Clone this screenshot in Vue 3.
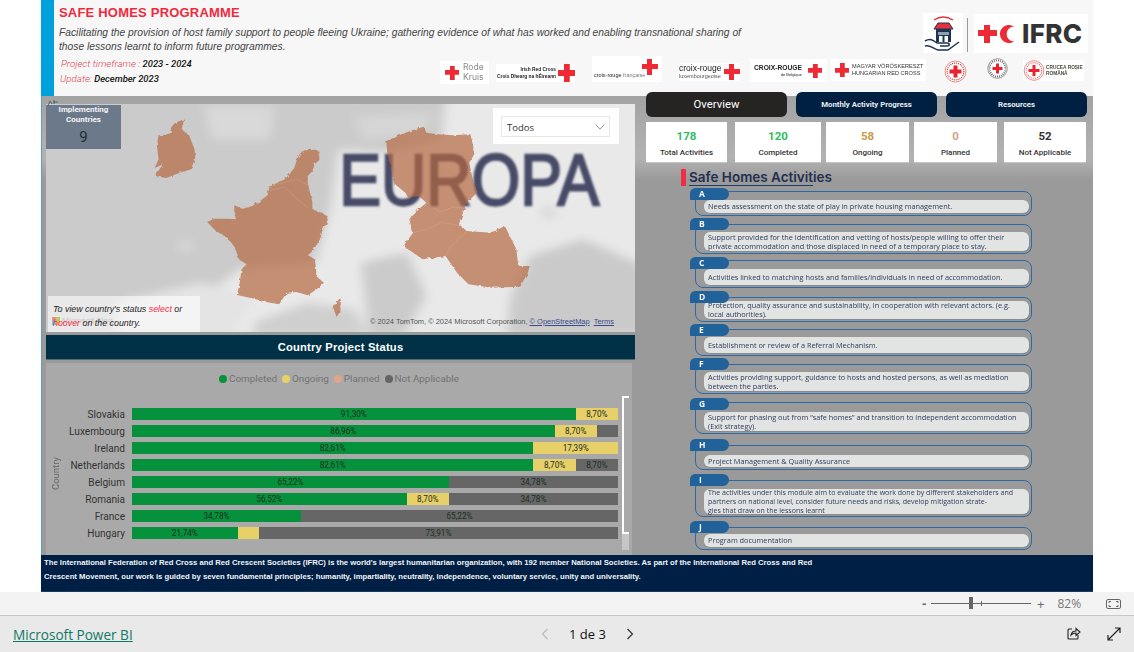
<template>
  <div class="page">
    <div class="report">
      <header class="top">
        <div class="strip"></div>
        <div class="top-body">
          <div class="top-row">
            <div class="intro">
              <h1 class="prog-title">SAFE HOMES PROGRAMME</h1>
              <p class="prog-desc">Facilitating the provision of host family support to people fleeing Ukraine; gathering evidence of what has worked and enabling transnational sharing of those lessons learnt to inform future programmes.</p>
            </div>
            <div class="brand">
              <div class="house-box">
                <svg width="40" height="40" viewBox="0 0 40 40">
                  <path d="M11 7 Q20 1 30 7" fill="none" stroke="#e8303c" stroke-width="1.300" />
                  <path d="M11 16 L15 10 H26 L30 16 Z" fill="#e8303c" stroke="#1c3553" stroke-width="1" />
                  <rect x="13" y="16" width="15" height="13" fill="#1c3553" />
                  <rect x="15" y="19" width="11" height="3" fill="#8fa0b0" />
                  <rect x="16" y="23" width="3.500" height="6" fill="#fff" />
                  <rect x="21.500" y="23" width="3.500" height="6" fill="#fff" />
                  <path d="M2 28 C7 25 10 27 14 30 L24 30 C27 30 27 33 24 33 L17 33 M2 33 C7 31 10 36 15 37 L25 37 L36 29" fill="none" stroke="#1c3553" stroke-width="1.500" />
                </svg>
              </div>
              <div class="brand-rule"></div>
              <div class="ifrc-box">
                <span class="cross cross-lg"></span>
                <svg class="crescent" width="18" height="18" viewBox="0 0 18 18">
                  <path d="M16 1.600 A9 9 0 1 0 16 16.400 A7.200 7.200 0 0 1 16 1.600 Z" fill="#ee2a35" />
                </svg>
                <span class="ifrc-word">IFRC</span>
              </div>
            </div>
          </div>
          <div class="bottom-row">
            <div class="dates">
              <p class="date-line first"><span class="date-key">Project timeframe : </span><span class="date-val">2023 - 2024</span></p>
              <p class="date-line"><span class="date-key">Update: </span><span class="date-val">December 2023</span></p>
            </div>
            <div class="logo logo-rode">
              <span class="cross cross-14"></span>
              <span class="rode-word">Rode<br>Kruis</span>
            </div>
            <div class="logo logo-irish">
              <span class="irish-word"><b>Irish Red Cross</b><b>Crois Dhearg na hÉireann</b></span>
              <span class="cross cross-17"></span>
            </div>
            <div class="logo logo-french">
              <span class="french-word">croix-rouge <i>française</i></span>
              <span class="cross cross-16"></span>
            </div>
            <div class="logo logo-lux">
              <span class="lux-word">croix-rouge<small>luxembourgeoise</small></span>
              <span class="cross cross-16"></span>
            </div>
            <div class="logo logo-belg">
              <span class="belg-word">CROIX-ROUGE<small>de Belgique</small></span>
              <span class="cross cross-14"></span>
            </div>
            <div class="logo logo-hung">
              <span class="cross cross-14"></span>
              <span class="hung-word">MAGYAR VÖRÖSKERESZT<br>HUNGARIAN RED CROSS</span>
            </div>
            <div class="logo logo-round-a">
              <svg width="23" height="23" viewBox="0 0 23 23">
                <circle cx="11.500" cy="11.500" r="10.500" fill="#fff" stroke="#e88" stroke-width="1" />
                <circle cx="11.500" cy="11.500" r="8.400" fill="#fff" stroke="#a33" stroke-width="1.200" stroke-dasharray="1 1" />
                <path d="M9.500 5.500h4v4h4v4h-4v4h-4v-4h-4v-4h4z" fill="#e8232f" />
              </svg>
            </div>
            <div class="logo logo-round-b">
              <svg width="21" height="21" viewBox="0 0 21 21">
                <circle cx="10.500" cy="10.500" r="9.800" fill="#fff" stroke="#999" stroke-width="1" />
                <circle cx="10.500" cy="10.500" r="8" fill="#fff" stroke="#777" stroke-width="2" stroke-dasharray="1 1" />
                <path d="M9 5.500h3v3.500h3.500v3h-3.500v3.500h-3v-3.500h-3.500v-3h3.500z" fill="#e8232f" />
              </svg>
            </div>
            <div class="logo logo-rom">
              <svg width="22" height="21" viewBox="0 0 21 21">
                <circle cx="10.500" cy="10.500" r="9.800" fill="#fff" stroke="#e88" stroke-width="1" />
                <circle cx="10.500" cy="10.500" r="7.800" fill="#fff" stroke="#d66" stroke-width="1.200" stroke-dasharray="1 1" />
                <path d="M9 5h3v4h4v3h-4v4h-3v-4h-4v-3h4z" fill="#e8232f" />
              </svg>
              <span class="rom-word">CRUCEA ROȘIE<br>ROMÂNĂ</span>
            </div>
          </div>
        </div>
      </header>

      <main class="main">
        <section class="left-col">
          <svg class="corner-mark" width="12" height="8" viewBox="0 0 12 8">
            <path d="M1 7 3 2 5 5M6 3h5M7 1v4" fill="none" stroke="#4a5560" stroke-width=".8" />
          </svg>
          <div class="map">
            <svg class="map-art" viewBox="16 24 1539 684" preserveAspectRatio="none">
              <defs>
                <filter id="soft" x="-10%" y="-10%" width="120%" height="120%">
                  <feGaussianBlur stdDeviation="14" />
                </filter>
                <filter id="letters" x="-5%" y="-10%" width="110%" height="120%">
                  <feGaussianBlur stdDeviation="3" />
                </filter>
                <filter id="rough" x="-5%" y="-5%" width="110%" height="110%">
                  <feTurbulence type="fractalNoise" baseFrequency=".09" numOctaves="2" seed="4" />
                  <feDisplacementMap in="SourceGraphic" scale="9" />
                </filter>
              </defs>
              <rect x="16" y="24" width="1539" height="684" fill="#e9e9e9" />
              <g filter="url(#soft)">
                <path d="M-20 0 H1060 L1050 130 L900 170 L780 160 L760 330 L720 500 L520 520 L430 600 L200 720 H-20 Z" fill="#cbcbcb" />
                <path d="M430 30 L610 30 L600 130 L450 130 Z" fill="#d9d9d9" />
                <path d="M820 60 L1030 50 L1000 120 L840 130 Z" fill="#d5d5d5" />
                <path d="M200 620 L420 560 L560 600 L500 720 L200 720 Z" fill="#e4e4e4" />
                <path d="M840 500 L960 470 L1010 600 L950 720 L860 720 Z" fill="#cbcbcb" />
                <path d="M560 680 L700 620 L820 640 L860 720 L560 720 Z" fill="#cfcfcf" />
                <path d="M1280 480 L1420 430 L1600 520 L1600 720 L1220 720 L1230 600 Z" fill="#cacaca" />
                <circle cx="1330" cy="350" r="20" fill="#d8d8d8" />
                <circle cx="380" cy="450" r="18" fill="#d9d9d9" />
              </g>
              <text x="782" y="326" class="europa" textLength="680" lengthAdjust="spacingAndGlyphs" filter="url(#letters)">EUROPA</text>
              <g class="land" filter="url(#rough)">
                <path d="M310 118 L328 116 L345 110 L342 96 L352 82 L378 68 L370 100 L390 118 L404 160 L406 185 L395 220 L362 232 L330 246 L300 240 L322 205 L300 216 L310 190 L306 150 Z" />
                <path d="M905 135 L925 125 L960 108 L985 98 L1003 92 L1010 110 L1040 115 L1080 118 L1125 115 L1132 150 L1135 175 L1122 200 L1130 245 L1142 290 L1125 310 L1110 335 L1075 335 L1045 348 L1010 320 L990 300 L962 305 L955 290 L925 262 L918 215 L908 175 Z" />
                <path d="M640 250 L652 235 L665 215 L672 190 L680 172 L695 160 L715 158 L730 168 L730 192 L718 205 L712 225 L700 240 L700 262 L706 290 L712 318 L712 340 L735 350 L755 362 L748 385 L738 405 L732 430 L715 462 L700 478 L718 488 L722 520 L722 540 L742 560 L725 578 L700 598 L670 588 L645 590 L625 625 L590 618 L560 608 L515 597 L522 560 L527 520 L540 505 L520 490 L510 455 L490 425 L460 405 L437 378 L455 368 L495 368 L512 370 L508 345 L508 328 L530 338 L555 330 L575 315 L595 298 L600 272 L618 262 Z" />
                <path d="M775 620 L787 600 L785 650 L775 662 L765 630 Z" />
                <path d="M1010 320 L1045 348 L1075 335 L1110 335 L1095 385 L1115 405 L1180 410 L1215 390 L1232 430 L1245 460 L1250 510 L1280 510 L1275 530 L1255 572 L1180 575 L1120 565 L1090 530 L1060 480 L1000 490 L950 450 L975 410 L965 370 L990 340 Z" />
              </g>
              <g class="borders">
                <path d="M600 285 L640 272 L668 305 L700 335" />
                <path d="M618 265 L670 250 L705 270" />
                <path d="M975 410 L1010 400 L1050 380 L1095 388" />
                <path d="M1115 405 L1075 450 L1060 480" />
              </g>
            </svg>
            <div class="implementing">
              <div class="impl-label">Implementing<br>Countries</div>
              <div class="impl-value">9</div>
            </div>
            <div class="slicer">
              <div class="slicer-box">
                <span>Todos</span>
                <svg width="10" height="6" viewBox="0 0 10 6"><path d="M.5.5 5 5.200 9.500.5" fill="none" stroke="#777" stroke-width=".8" /></svg>
              </div>
            </div>
            <div class="map-note">
              <div class="bing"><span class="bing-mark"></span>Microsoft Bing</div>
              <p>To view country's status <em>select</em> or<br><em>hoover</em> on the country.</p>
            </div>
            <div class="attribution">© 2024 TomTom, © 2024 Microsoft Corporation, <a>© OpenStreetMap</a> &nbsp;<a>Terms</a></div>
          </div>

          <div class="chart-title">Country Project Status</div>

          <div class="chart">
            <div class="legend">
              <span v-for="item in legend" :key="item.name" class="legend-item">
                <i class="dot" :class="item.cls"></i>{{ item.name }}
              </span>
            </div>
            <div class="plot">
              <div class="axis-name"><span>Country</span></div>
              <div class="rows">
                <div v-for="row in rows" :key="row.name" class="row">
                  <div class="row-label">{{ row.name }}</div>
                  <div class="bar">
                    <div
                      v-for="(seg, i) in row.segs"
                      :key="i"
                      class="seg"
                      :class="seg[0]"
                      :style="{ width: seg[1] + '%' }"
                    >{{ seg[2] ? pct(seg[1]) : '' }}</div>
                  </div>
                </div>
              </div>
            </div>
            <div class="scroll-track"><div class="scroll-thumb"></div></div>
          </div>
        </section>

        <section class="right-col">
          <nav class="tabs">
            <div class="tab-btn active">Overview</div>
            <div class="tab-btn">Monthly Activity Progress</div>
            <div class="tab-btn">Resources</div>
          </nav>
          <div class="kpis">
            <div v-for="k in kpis" :key="k.label" class="kpi" :class="k.cls">
              <div class="kpi-num">{{ k.num }}</div>
              <div class="kpi-label">{{ k.label }}</div>
            </div>
          </div>
          <div class="act-head">
            <h2 class="act-title">Safe Homes Activities</h2>
          </div>
          <div class="activities">
            <div
              v-for="a in activities"
              :key="a.id"
              class="activity"
              :style="{ height: a.h + 'px', marginBottom: a.gap + 'px' }"
            >
              <div class="act-tab">{{ a.id }}</div>
              <div class="act-frame" :style="{ marginTop: (a.drop - 12) + 'px' }">
                <div class="act-pill" :class="{ tight: a.tight }" :style="{ height: a.pill + 'px' }">{{ a.text }}</div>
              </div>
            </div>
          </div>
        </section>
      </main>

      <footer class="about">
        <p>The International Federation of Red Cross and Red Crescent Societies (IFRC) is the world's largest humanitarian organization, with 192 member National Societies. As part of the International Red Cross and Red</p>
        <p>Crescent Movement, our work is guided by seven fundamental principles; humanity, impartiality, neutrality, independence, voluntary service, unity and universality.</p>
      </footer>
    </div>

    <div class="zoom-bar">
      <span class="zoom-minus">-</span>
      <div class="zoom-slider"><span class="zoom-thumb"></span><span class="zoom-tick"></span></div>
      <span class="zoom-plus">+</span>
      <span class="zoom-val">82%</span>
      <svg class="fit-icon" width="15" height="10" viewBox="0 0 15 10">
        <rect x=".5" y=".5" width="14" height="9" rx="1.500" fill="none" stroke="#666" />
        <path d="M3 4V2.500H5M10 2.500H12V4M12 6V7.500H10M5 7.500H3V6" fill="none" stroke="#444" stroke-width=".8" />
      </svg>
    </div>

    <div class="pbi-bar">
      <a class="pbi-link">Microsoft Power BI</a>
      <div class="pager">
        <svg width="8" height="12" viewBox="0 0 8 12"><path d="M6.500 1 1.500 6l5 5" fill="none" stroke="#bbb" stroke-width="1.200" /></svg>
        <span>1 de 3</span>
        <svg width="8" height="12" viewBox="0 0 8 12"><path d="M1.500 1l5 5-5 5" fill="none" stroke="#333" stroke-width="1.200" /></svg>
      </div>
      <div class="pbi-icons">
        <svg width="14" height="13" viewBox="0 0 14 13">
          <path d="M5 2H2a1 1 0 0 0-1 1v8a1 1 0 0 0 1 1h8a1 1 0 0 0 1-1V8" fill="none" stroke="#222" stroke-width="1.100" />
          <path d="M4 8c.5-2.500 2.500-4 5-4V1.500L13 5 9 8.500V6C7 6 5.500 6.500 4 8Z" fill="none" stroke="#222" stroke-width="1.100" />
        </svg>
        <svg width="14" height="14" viewBox="0 0 14 14">
          <path d="M1 13 13 1M8 1h5v5M1 8v5h5" fill="none" stroke="#222" stroke-width="1.200" />
        </svg>
      </div>
    </div>
  </div>
</template>

<script setup>
const legend = [
  { name: 'Completed', cls: 'c-green' },
  { name: 'Ongoing', cls: 'c-yellow' },
  { name: 'Planned', cls: 'c-salmon' },
  { name: 'Not Applicable', cls: 'c-gray' },
];

const rows = [
  { name: 'Slovakia', segs: [['c-green', 91.3, true], ['c-yellow', 8.7, true]] },
  { name: 'Luxembourg', segs: [['c-green', 86.96, true], ['c-yellow', 8.7, true], ['c-gray', 4.34, false]] },
  { name: 'Ireland', segs: [['c-green', 82.61, true], ['c-yellow', 17.39, true]] },
  { name: 'Netherlands', segs: [['c-green', 82.61, true], ['c-yellow', 8.7, true], ['c-gray', 8.69, true]] },
  { name: 'Belgium', segs: [['c-green', 65.22, true], ['c-gray', 34.78, true]] },
  { name: 'Romania', segs: [['c-green', 56.52, true], ['c-yellow', 8.7, true], ['c-gray', 34.78, true]] },
  { name: 'France', segs: [['c-green', 34.78, true], ['c-gray', 65.22, true]] },
  { name: 'Hungary', segs: [['c-green', 21.74, true], ['c-yellow', 4.35, false], ['c-gray', 73.91, true]] },
];

// the Netherlands grey label reads 8,70 in the report although it rounds down here
const pct = (v) => (v === 8.69 ? 8.7 : v).toFixed(2).replace('.', ',') + '%';

const kpis = [
  { num: 178, label: 'Total Activities', cls: 'k-total' },
  { num: 120, label: 'Completed', cls: 'k-done' },
  { num: 58, label: 'Ongoing', cls: 'k-ongoing' },
  { num: 0, label: 'Planned', cls: 'k-planned' },
  { num: 52, label: 'Not Applicable', cls: 'k-na' },
];

const activities = [
  { id: 'A', h: 28, gap: 2, drop: 3, pill: 13, text: 'Needs assessment on the state of play in private housing management.' },
  { id: 'B', h: 36, gap: 3, drop: 6, pill: 19, text: 'Support provided for the identification and vetting of hosts/people willing to offer their private accommodation and those displaced in need of a temporary place to stay.' },
  { id: 'C', h: 31, gap: 3, drop: 3, pill: 16, text: 'Activities linked to matching hosts and families/individuals in need of accommodation.' },
  { id: 'D', h: 31, gap: 2, drop: 6, pill: 18, text: 'Protection, quality assurance and sustainability, in cooperation with relevant actors. (e.g. local authorities).' },
  { id: 'E', h: 32, gap: 2, drop: 5, pill: 16, text: 'Establishment or review of a Referral Mechanism.' },
  { id: 'F', h: 36, gap: 4, drop: 6, pill: 19, text: 'Activities providing support, guidance to hosts and hosted persons, as well as mediation between the parties.' },
  { id: 'G', h: 36, gap: 5, drop: 4, pill: 19, text: 'Support for phasing out from “safe homes” and transition to independent accommodation (Exit strategy).' },
  { id: 'H', h: 31, gap: 4, drop: 6, pill: 12, text: 'Project Management & Quality Assurance' },
  { id: 'I', h: 43, gap: 4, drop: 6, pill: 25, tight: true, text: 'The activities under this module aim to evaluate the work done by different stakeholders and partners on national level, consider future needs and risks, develop mitigation strate-\ngies that draw on the lessons learnt' },
  { id: 'J', h: 29, gap: 0, drop: 6, pill: 13, text: 'Program documentation' },
];
</script>

<style>
html, body {
  margin: 0;
  background: #ffffff;
}
</style>

<style scoped>
.page {
  width: 1134px;
  height: 652px;
  overflow: hidden;
  font-family: "Liberation Sans", Arial, sans-serif;
  background: #ffffff;
}

.report {
  width: 1052px;
  height: 592px;
  margin-left: 41px;
}

/* header */
.top {
  display: flex;
  height: 96px;
  background: #f7f7f7;
}

.strip {
  width: 13px;
  background: #00a0dc;
}

.top-body {
  flex: 1;
  display: flex;
  flex-direction: column;
}

.top-row {
  display: flex;
  justify-content: space-between;
  height: 54px;
}

.intro {
  width: 695px;
  padding: 5px 0 0 5px;
}

.prog-title {
  margin: 0;
  font-size: 13px;
  line-height: 15px;
  font-weight: 700;
  letter-spacing: .2px;
  color: #f02a3c;
}

.prog-desc {
  margin: 6px 0 0;
  font-size: 10.280px;
  line-height: 14px;
  font-style: italic;
  color: #454545;
}

.brand {
  display: flex;
  align-items: flex-start;
  padding: 13px 5px 0 0;
}

.house-box {
  width: 40px;
  height: 40px;
  background: #ffffff;
}

.brand-rule {
  width: 1px;
  height: 34px;
  margin: 5px 6px 0 4px;
  background: #999999;
}

.ifrc-box {
  display: flex;
  align-items: center;
  width: 114px;
  height: 39px;
  margin-top: 1px;
  padding-left: 4px;
  box-sizing: border-box;
  background: #ffffff;
}

.ifrc-word {
  margin-left: 6px;
  font-family: Inter, "Liberation Sans", sans-serif;
  font-size: 26px;
  font-weight: 800;
  letter-spacing: .3px;
  color: #333333;
}

.crescent {
  flex: none;
  margin-left: 1px;
}

.cross {
  display: block;
  flex: none;
  background:
    linear-gradient(#ee2a35, #ee2a35) center / 100% 34% no-repeat,
    linear-gradient(#ee2a35, #ee2a35) center / 34% 100% no-repeat;
}

.cross-lg { width: 19px; height: 18px; }
.cross-14 { width: 14px; height: 14px; }
.cross-16 { width: 16px; height: 16px; }
.cross-17 { width: 17px; height: 18px; }

.bottom-row {
  display: flex;
  align-items: flex-start;
}

.dates {
  width: 386px;
  box-sizing: border-box;
  padding: 2px 0 0 6px;
}

.date-line {
  margin: 0;
  font-family: Roboto, sans-serif;
  font-size: 9.800px;
  line-height: 15px;
  font-style: italic;
  white-space: nowrap;
}

.date-line.first {
  padding-left: 1px;
}

.date-key {
  color: #e04050;
  font-weight: 300;
}

.date-val {
  font-size: 9.400px;
  color: #111111;
  font-weight: 500;
}

.logo {
  display: flex;
  align-items: center;
  flex: none;
  box-sizing: border-box;
  background: #ffffff;
  filter: blur(.3px);
}

.logo-rode {
  width: 49px;
  height: 23px;
  margin-top: 7px;
  padding-left: 5px;
}

.rode-word {
  margin-left: 4px;
  font-family: Inter, sans-serif;
  font-size: 8.500px;
  line-height: 9.500px;
  color: #8a8a8a;
}

.logo-irish {
  width: 79px;
  height: 18px;
  margin: 10px 0 0 7px;
  justify-content: flex-end;
}

.irish-word {
  display: flex;
  flex-direction: column;
  align-items: flex-end;
  margin-right: 2px;
  font-size: 4.800px;
  line-height: 7px;
  white-space: nowrap;
  color: #222222;
}

.logo-french {
  position: relative;
  width: 70px;
  height: 26px;
  margin: 2px 0 0 17px;
}

.logo-french .cross {
  position: absolute;
  left: 50px;
  top: 3px;
}

.french-word {
  position: absolute;
  left: 2px;
  top: 16px;
  font-size: 5.500px;
  white-space: nowrap;
  color: #222222;
}

.french-word i {
  font-style: normal;
  color: #777777;
}

.logo-lux {
  width: 61px;
  height: 18px;
  margin: 9px 0 0 17px;
  justify-content: space-between;
}

.lux-word {
  display: flex;
  flex-direction: column;
  font-size: 8.500px;
  line-height: 8.500px;
  white-space: nowrap;
  color: #222222;
}

.lux-word small {
  font-size: 5.500px;
  line-height: 7px;
  color: #555555;
}

.logo-belg {
  width: 77px;
  height: 23px;
  margin: 5px 0 0 10px;
  padding: 0 5px 0 4px;
  justify-content: space-between;
}

.belg-word {
  display: flex;
  flex-direction: column;
  align-items: flex-end;
  font-size: 6.700px;
  line-height: 8px;
  font-weight: 700;
  white-space: nowrap;
  color: #222222;
}

.belg-word small {
  font-size: 4px;
  line-height: 5px;
  font-weight: 400;
}

.logo-hung {
  width: 95px;
  height: 22px;
  margin: 5px 0 0 4px;
  padding-left: 4px;
}

.hung-word {
  margin-left: 3px;
  font-size: 5.600px;
  line-height: 7px;
  white-space: nowrap;
  color: #333333;
}

.logo-round-a {
  width: 23px;
  height: 23px;
  margin: 6px 0 0 18px;
  background: transparent;
}

.logo-round-b {
  width: 21px;
  height: 21px;
  margin: 4px 0 0 20px;
  background: transparent;
}

.logo-rom {
  width: 61px;
  height: 21px;
  margin: 6px 0 0 15px;
}

.rom-word {
  margin-left: 1px;
  font-size: 4.800px;
  line-height: 5.500px;
  font-weight: 700;
  white-space: nowrap;
  color: #4a4a3a;
}

/* main body */
.main {
  display: flex;
  height: 459px;
  box-sizing: border-box;
  border-left: 1px solid #5b9ed0;
  padding-left: 4px;
  background: linear-gradient(#a3a3a3 0, #b2b2b2 62px, #9a9a9a 84px);
}

.left-col {
  position: relative;
  width: 589px;
  padding-top: 8px;
  margin-right: 11px;
}

.corner-mark {
  position: absolute;
  left: 1px;
  top: 3px;
  z-index: 1;
}

.map {
  position: relative;
  height: 228px;
  overflow: hidden;
}

.map-art {
  display: block;
  width: 100%;
  height: 100%;
}

.europa {
  font-family: "Liberation Sans", sans-serif;
  font-size: 219px;
  fill: #474c68;
  stroke: #474c68;
  stroke-width: 7px;
}

.land path {
  fill: rgb(181, 103, 65);
  fill-opacity: .69;
}

.borders path {
  fill: none;
  stroke: #d8ac96;
  stroke-width: 1;
}

.implementing {
  position: absolute;
  left: 0;
  top: 1px;
  width: 75px;
  height: 44px;
  box-sizing: border-box;
  background: #6c798b;
  text-align: center;
  font-family: Roboto, sans-serif;
}

.impl-label {
  font-size: 8px;
  line-height: 9.500px;
  font-weight: 700;
  color: #f4f4f4;
}

.impl-value {
  margin-top: 4px;
  font-size: 15px;
  line-height: 18px;
  color: #252b33;
}

.slicer {
  position: absolute;
  left: 447px;
  top: 4px;
  width: 126px;
  height: 36px;
  padding: 8px;
  box-sizing: border-box;
  background: #ffffff;
}

.slicer-box {
  display: flex;
  align-items: center;
  justify-content: space-between;
  height: 21px;
  margin-right: 1px;
  padding: 1px 4px 0 5px;
  border: 1px solid #e8e8e8;
  box-sizing: border-box;
  font-family: "Open Sans", sans-serif;
  font-size: 9.500px;
  color: #333333;
}

.map-note {
  position: absolute;
  left: 2px;
  bottom: 0;
  width: 152px;
  height: 36px;
  background: rgba(255, 255, 255, .58);
}

.map-note p {
  position: relative;
  margin: 0;
  padding: 6px 0 0 5px;
  font-size: 8.850px;
  line-height: 14px;
  font-style: italic;
  color: #222222;
}

.map-note em {
  color: #f42a40;
}

.bing {
  position: absolute;
  left: 4px;
  top: 20px;
  display: flex;
  align-items: center;
  gap: 2px;
  font-size: 8px;
  color: #c8c8c8;
}

.bing-mark {
  width: 8px;
  height: 8px;
  opacity: .55;
  background:
    linear-gradient(90deg, #f25022 50%, #7fba00 50%) top / 100% 50% no-repeat,
    linear-gradient(90deg, #00a4ef 50%, #ffb900 50%) bottom / 100% 50% no-repeat;
}

.attribution {
  position: absolute;
  right: 21px;
  bottom: 6px;
  font-size: 7.450px;
  white-space: nowrap;
  color: #555555;
}

.attribution a {
  color: #3d4a8e;
  text-decoration: underline;
}

.chart-title {
  height: 25px;
  margin-top: 3px;
  background: #003146;
  border-bottom: 1px solid #556b78;
  box-sizing: border-box;
  font-size: 11.200px;
  line-height: 25px;
  font-weight: 700;
  letter-spacing: .2px;
  text-align: center;
  color: #ffffff;
}

.chart {
  position: relative;
  width: 586px;
  height: 192px;
  margin-top: 3px;
  background: #a9a9a9;
}

.legend {
  display: flex;
  justify-content: center;
  gap: 5px;
  height: 14px;
  padding-top: 9px;
  font-family: Roboto, sans-serif;
  font-size: 9.900px;
  line-height: 14px;
  color: #737373;
}

.legend-item {
  display: flex;
  align-items: center;
  gap: 2px;
}

.dot {
  width: 8px;
  height: 8px;
  border-radius: 50%;
}

.plot {
  display: flex;
  margin-top: 22px;
}

.axis-name {
  display: flex;
  align-items: center;
  justify-content: center;
  width: 18px;
  font-family: Roboto, sans-serif;
  font-size: 9.500px;
  color: #666666;
}

.axis-name span {
  writing-mode: vertical-rl;
  transform: rotate(180deg);
}

.rows {
  display: flex;
  flex-direction: column;
  gap: 5px;
}

.row {
  display: flex;
  align-items: center;
  height: 12px;
}

.row-label {
  width: 61px;
  margin-right: 7px;
  font-family: Roboto, sans-serif;
  font-size: 10.100px;
  text-align: right;
  white-space: nowrap;
  color: #333333;
}

.bar {
  display: flex;
  width: 486px;
  height: 12px;
}

.seg {
  text-align: center;
  font-family: Roboto, sans-serif;
  font-size: 8.200px;
  line-height: 12px;
  color: #1c2e23;
}

.c-green { background: #06923c; }
.c-yellow { background: #e8d068; }
.c-salmon { background: #e0a48a; }
.c-gray { background: #666666; }

.scroll-track {
  position: absolute;
  left: 576px;
  top: 33px;
  width: 7px;
  height: 154px;
  background: #c6c6c6;
}

.scroll-thumb {
  height: 134px;
  border: 2px solid #ffffff;
  border-right: 0;
  background: #a9a9a9;
}

.right-col {
  width: 441px;
  margin-top: -4px;
}

.tabs {
  display: flex;
  gap: 9px;
}

.tab-btn {
  width: 141px;
  height: 25px;
  border-radius: 6px;
  background: #002042;
  font-family: Roboto, sans-serif;
  font-size: 7.800px;
  line-height: 25px;
  font-weight: 700;
  text-align: center;
  color: #e8ecf0;
}

.tab-btn.active {
  background: #252423;
  font-size: 11.300px;
  font-weight: 400;
  color: #ffffff;
}

.kpis {
  display: flex;
  margin-top: 5px;
}

.kpi {
  height: 40px;
  box-sizing: border-box;
  padding-top: 7px;
  background: #ffffff;
  box-shadow: 0 1px 0 #c4c4c4;
  text-align: center;
  font-family: Roboto, sans-serif;
}

.k-total { width: 81px; }
.k-done { width: 86px; margin-left: 8px; }
.k-ongoing { width: 83px; margin-left: 5px; }
.k-planned { width: 83px; margin-left: 5px; }
.k-na { width: 82px; margin-left: 7px; }

.kpi-num {
  font-size: 11.500px;
  line-height: 14px;
  font-weight: 700;
}

.k-total .kpi-num,
.k-done .kpi-num { color: #2ebd62; }
.k-ongoing .kpi-num { color: #c99a45; }
.k-planned .kpi-num { color: #d9a184; }
.k-na .kpi-num { color: #333333; }

.kpi-label {
  margin-top: 5px;
  font-size: 8px;
  line-height: 10px;
  font-weight: 500;
  color: #333333;
}

.act-head {
  margin: 7px 0 0 35px;
  padding-left: 3px;
  border-left: 5px solid #ee2f44;
  width: 142px;
  height: 17px;
}

.act-title {
  margin: 0;
  width: 124px;
  border-bottom: 1px solid #1f3c66;
  font-family: Inter, sans-serif;
  font-size: 13.500px;
  line-height: 16px;
  font-weight: 600;
  white-space: nowrap;
  color: #1f3050;
}

.activities {
  margin: 2px 0 0 44px;
  width: 342px;
  filter: blur(.25px);
}

.activity {
  display: flex;
  flex-direction: column;
}

.act-tab {
  position: relative;
  flex: none;
  width: 39px;
  height: 12px;
  padding-left: 9px;
  box-sizing: border-box;
  border-radius: 6px 7px 7px 1px;
  background: #22629b;
  font-family: "Open Sans", sans-serif;
  font-size: 8.500px;
  line-height: 12px;
  font-weight: 700;
  color: #f4f6f8;
}

.act-frame {
  flex: 1;
  display: flex;
  align-items: flex-end;
  margin-left: 5px;
  padding: 0 2px 2px 8px;
  box-sizing: border-box;
  border: 1.500px solid #2d6aa5;
  border-radius: 8px;
}

.act-pill {
  flex: 1;
  display: flex;
  align-items: center;
  box-sizing: border-box;
  padding: 0 3px 0 4px;
  border-radius: 6px;
  background: #e2e3e3;
  box-shadow: 1px 1px 0 #8a8a8a;
  font-family: "Open Sans", sans-serif;
  font-size: 7.350px;
  line-height: 8.800px;
  color: #2d3c5a;
}

.act-pill.tight {
  font-size: 7.050px;
  white-space: pre-line;
}

.about {
  height: 37px;
  box-sizing: border-box;
  padding: 1px 0 0 3px;
  background: #001f45;
  border-bottom: 1px solid #1a3c5c;
}

.about p {
  margin: 0;
  font-size: 7.700px;
  line-height: 14px;
  font-weight: 700;
  white-space: nowrap;
  color: #f2f4f6;
}

/* bottom bars */
.zoom-bar {
  display: flex;
  align-items: center;
  height: 23px;
  padding-left: 922px;
  background: #f3f3f3;
  color: #666666;
}

.zoom-minus {
  width: 9px;
  font-size: 13px;
  font-weight: 700;
}

.zoom-slider {
  position: relative;
  width: 100px;
  height: 1px;
  background: #666666;
}

.zoom-thumb {
  position: absolute;
  left: 38px;
  top: -6px;
  width: 4px;
  height: 12px;
  background: #666666;
}

.zoom-tick {
  position: absolute;
  left: 50px;
  top: -2px;
  width: 1px;
  height: 5px;
  background: #666666;
}

.zoom-plus {
  margin-left: 6px;
  font-family: "Open Sans", sans-serif;
  font-size: 13px;
}

.zoom-val {
  margin-left: 13px;
  font-family: "Open Sans", sans-serif;
  font-size: 12px;
  color: #777777;
}

.fit-icon {
  margin-left: 25px;
}

.pbi-bar {
  display: flex;
  align-items: center;
  height: 37px;
  box-sizing: border-box;
  border-top: 1px solid #c8c8c8;
  background: #e9e9e9;
}

.pbi-link {
  width: 527px;
  padding: 1px 0 0 13px;
  box-sizing: border-box;
  font-family: "Open Sans", sans-serif;
  font-size: 13.600px;
  text-decoration: underline;
  color: #117865;
}

.pager {
  display: flex;
  align-items: center;
  gap: 20px;
  width: 95px;
  margin-left: 14px;
  font-family: "Open Sans", sans-serif;
  font-size: 13px;
  white-space: nowrap;
  color: #111111;
}

.pbi-icons {
  display: flex;
  gap: 26px;
  margin-left: 431px;
}
</style>
